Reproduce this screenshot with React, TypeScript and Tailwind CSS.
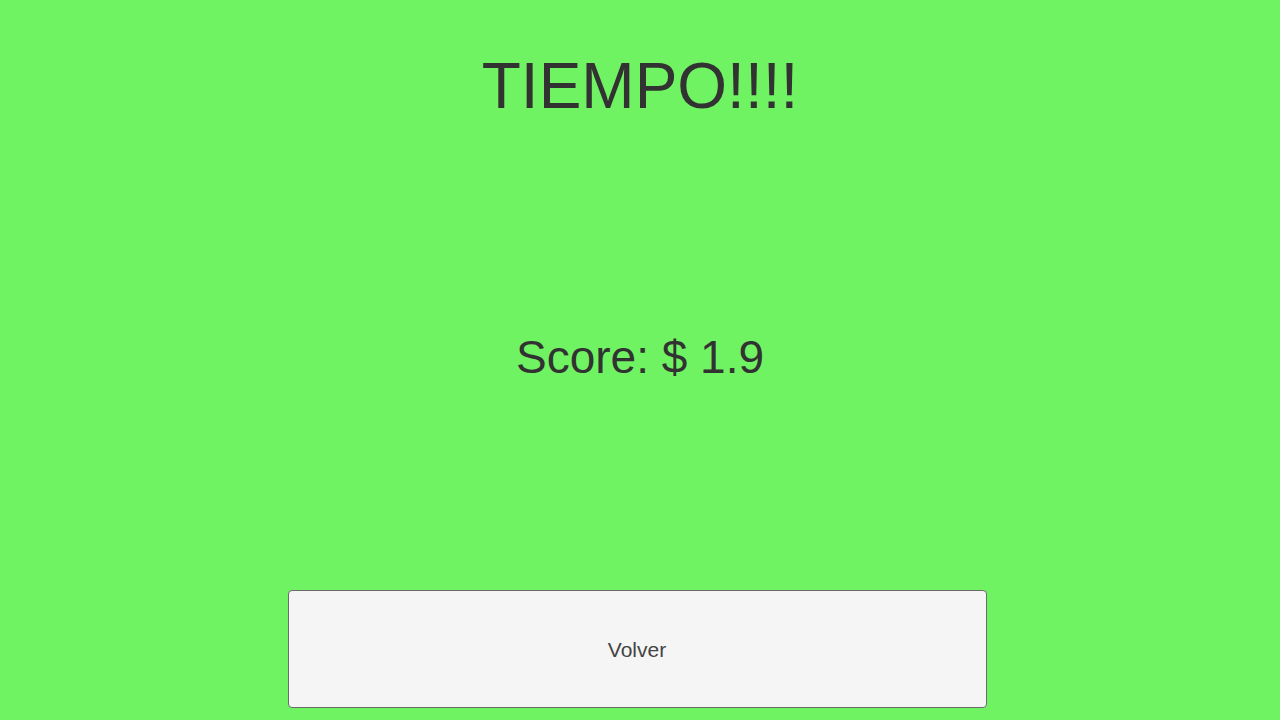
export default function App() {
  return (
    <div
      className="w-full h-[720px] bg-[#70f362] flex flex-col items-center overflow-hidden"
      style={{ fontFamily: '"Liberation Sans", Arial, sans-serif' }}
    >
      <h1 className="mt-[54px] text-[64px] leading-[64px] text-[#323232]">TIEMPO!!!!</h1>
      <p className="mt-[216px] text-[46px] leading-[46px] text-[#323232]">Score: $ 1.9</p>
      <button className="mt-[210px] w-[699px] h-[118px] bg-[#f5f5f5] border border-[#6b6b6b] rounded-[4px] text-[21px] text-[#444444] flex items-center justify-center pt-[2px] -translate-x-[3px]">
        Volver
      </button>
    </div>
  );
}
